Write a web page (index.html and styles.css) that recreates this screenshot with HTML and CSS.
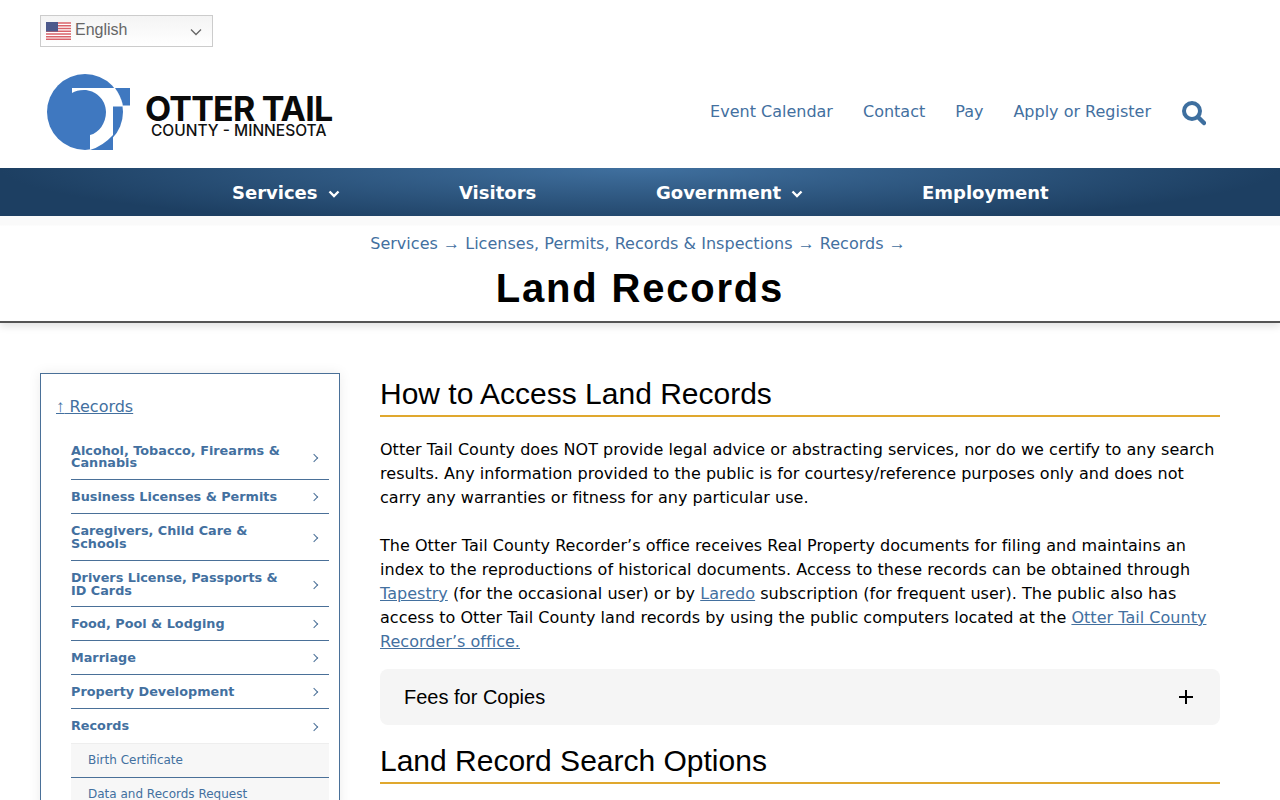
FILE: index.html
```html
<!DOCTYPE html>
<html lang="en">
<head>
    <meta charset="UTF-8">
    <meta name="viewport" content="width=device-width, initial-scale=1.0">
    <title>Land Records - Otter Tail County</title>
    <link rel="stylesheet" href="styles.css">
</head>
<body>
    <div class="lang-row">
        <div class="lang-select">
            <svg class="flag" width="25" height="18" viewBox="0 0 25 18">
                <rect width="25" height="18" fill="#fff"/>
                <path d="M0 1h25M0 3.800h25M0 6.500h25M0 9.200h25M0 12h25M0 14.700h25M0 17.300h25" stroke="#d9636b" stroke-width="1.400"/>
                <rect width="12" height="9.500" fill="#4d5a8c"/>
            </svg>
            <span class="lang-label">English</span>
            <svg class="lang-caret" width="12" height="8" viewBox="0 0 12 8"><path d="M1 1.500l5 5 5-5" fill="none" stroke="#666" stroke-width="1.300"/></svg>
        </div>
    </div>

    <header class="site-header">
        <a class="logo" href="#">
            <svg class="logo-mark" width="84" height="78" viewBox="47 73 84 78">
                <circle cx="85" cy="112" r="38" fill="#3f78c0"/>
                <path d="M72 88H115Q121 96 123 106.500H113V150H90V135C99 133 106 123 106 112C106 99 95 90 84 90C79 90 75 91 72 93Z" fill="#fff"/>
                <path d="M115 88H130V105.500H123Q121 96 115 88Z" fill="#3f78c0"/>
                <path d="M113 135Q103 146 90 150H113Z" fill="#3f78c0"/>
            </svg>
            <span class="logo-text">
                <span class="logo-name">OTTER TAIL</span>
                <span class="logo-sub">COUNTY - MINNESOTA</span>
            </span>
        </a>
        <nav class="util-nav">
            <a href="#">Event Calendar</a>
            <a href="#">Contact</a>
            <a href="#">Pay</a>
            <a href="#">Apply or Register</a>
            <svg class="search-icon" width="25" height="26" viewBox="0 0 25 26"><circle cx="11" cy="11" r="8" fill="none" stroke="#3e6f9f" stroke-width="4"/><path d="M17 17l6 6" stroke="#3e6f9f" stroke-width="4.500" stroke-linecap="round"/></svg>
        </nav>
    </header>

    <nav class="main-nav">
        <a href="#" class="nav-services">Services <svg width="12" height="8" viewBox="0 0 12 8"><path d="M1.500 1.500L6 6l4.500-4.500" fill="none" stroke="#fff" stroke-width="2.400"/></svg></a>
        <a href="#" class="nav-visitors">Visitors</a>
        <a href="#" class="nav-gov">Government <svg width="12" height="8" viewBox="0 0 12 8"><path d="M1.500 1.500L6 6l4.500-4.500" fill="none" stroke="#fff" stroke-width="2.400"/></svg></a>
        <a href="#" class="nav-jobs">Employment</a>
    </nav>

    <section class="page-title">
        <p class="crumbs"><a href="#">Services</a> <span class="arrow">→</span> <a href="#">Licenses, Permits, Records &amp; Inspections</a> <span class="arrow">→</span> <a href="#">Records</a> <span class="arrow">→</span></p>
        <h1>Land Records</h1>
    </section>

    <div class="layout">
        <aside class="side-nav">
            <a class="side-up" href="#"><span class="arrow">↑</span> Records</a>
            <ul class="side-list">
                <li><a href="#" class="first"><span>Alcohol, Tobacco, Firearms &amp; Cannabis</span></a></li>
                <li><a href="#"><span>Business Licenses &amp; Permits</span></a></li>
                <li><a href="#" class="roomy"><span>Caregivers, Child Care &amp; Schools</span></a></li>
                <li><a href="#" class="roomy tight"><span>Drivers License, Passports &amp; ID Cards</span></a></li>
                <li><a href="#"><span>Food, Pool &amp; Lodging</span></a></li>
                <li><a href="#"><span>Marriage</span></a></li>
                <li><a href="#"><span>Property Development</span></a></li>
                <li class="open"><a href="#"><span>Records</span></a>
                    <ul class="side-sub">
                        <li><a href="#">Birth Certificate</a></li>
                        <li><a href="#">Data and Records Request</a></li>
                    </ul>
                </li>
            </ul>
        </aside>

        <main class="content">
            <h2>How to Access Land Records</h2>
            <p>Otter Tail County does NOT provide legal advice or abstracting services, nor do we certify to any search results. Any information provided to the public is for courtesy/reference purposes only and does not carry any warranties or fitness for any particular use.</p>
            <p>The Otter Tail County Recorder’s office receives Real Property documents for filing and maintains an index to the reproductions of historical documents. Access to these records can be obtained through <a href="#">Tapestry</a> (for the occasional user) or by <a href="#">Laredo</a> subscription (for frequent user). The public also has access to Otter Tail County land records by using the public computers located at the <a href="#">Otter Tail County Recorder’s office.</a></p>
            <div class="accordion">
                <span>Fees for Copies</span>
                <svg width="16" height="16" viewBox="0 0 16 16"><path d="M8 1v14M1 8h14" stroke="#000" stroke-width="2"/></svg>
            </div>
            <h2>Land Record Search Options</h2>
        </main>
    </div>
</body>
</html>
```

FILE: styles.css
```css
:root {
    --link: #43709f;
    --side-line: #4a7098;
    --gold: #e0a82e;
}
* { margin: 0; padding: 0; box-sizing: border-box; }
body { font-family: 'DejaVu Sans', sans-serif; background: #fff; color: #000; font-size: 16px; }
a { color: var(--link); text-decoration: none; }
ul { list-style: none; }
.arrow { font-family: 'Liberation Sans', sans-serif; font-size: 17px; line-height: 1; }

.lang-row { padding: 15px 40px 0; height: 47px; }
.lang-select {
    display: flex; align-items: center; width: 173px; height: 32px; padding: 0 10px 0 5px;
    border: 1px solid #ccc; background: linear-gradient(#f4f4f4, #fff);
    font-family: 'Liberation Sans', sans-serif; font-size: 16px; color: #666;
}
.flag { margin-right: 4px; margin-top: -1px; }
.lang-label { margin-top: -2px; }
.lang-caret { margin-left: auto; margin-top: 1px; }

.site-header { display: flex; justify-content: space-between; align-items: center; height: 121px; padding: 8px 74px 0 47px; }
.logo { display: flex; align-items: center; gap: 14px; }
.logo-text { display: flex; flex-direction: column; align-items: center; color: #000; margin-top: 8px; }
.logo-name { font-family: Inter, sans-serif; font-weight: 700; font-size: 34px; line-height: 30px; letter-spacing: -0.8px; color: #0a0a0a; }
.logo-sub { font-family: Inter, sans-serif; font-weight: 500; font-size: 15.500px; line-height: 14px; color: #111; }
.util-nav { display: flex; align-items: center; gap: 30px; }
.search-icon { margin-top: 3px; }

.main-nav {
    position: relative; height: 48px; display: flex; align-items: center;
    background: radial-gradient(ellipse 640px 60px at 50% 0, #40709f, #1d3f62);
    font-weight: 700; font-size: 18px;
}
.main-nav a { color: #fff; position: absolute; top: 14px; }
.main-nav svg { margin-left: 4px; vertical-align: 1px; }
.nav-services { left: 232px; }
.nav-visitors { left: 459px; }
.nav-gov { left: 656px; }
.nav-jobs { left: 922px; }

.page-title {
    height: 107px; text-align: center; padding-top: 17px;
    border-bottom: 2px solid #555; box-shadow: 0 3px 8px rgba(0, 0, 0, 0.12);
    background: linear-gradient(#fafafa 9px, #fff 10px);
}
.crumbs { color: #43709f; line-height: 22px; letter-spacing: 0.03px; padding-right: 4px; }
.page-title h1 { font-family: 'Liberation Sans', sans-serif; font-size: 40px; font-weight: 700; letter-spacing: 1.800px; line-height: 46px; margin-top: 10px; }

.layout { display: flex; gap: 40px; padding: 50px 60px 0 40px; align-items: flex-start; }
.side-nav { flex: 0 0 300px; border: 1px solid var(--side-line); padding: 23px 10px 0 15px; box-shadow: 0 0 12px rgba(0, 0, 0, 0.08); }
.side-up { font-size: 16px; text-decoration: underline; }
.side-list { margin-top: 19px; padding-left: 15px; }
.side-list > li > a {
    display: flex; justify-content: space-between; align-items: center; min-height: 34px; padding: 4px 0;
    font-weight: 700; font-size: 12.800px; line-height: 12px; border-bottom: 1px solid var(--side-line);
}
.side-list > li > a span { max-width: 225px; }
.side-list > li > a.first { padding: 10px 0; }
.side-list > li > a.roomy { line-height: 13px; padding: 10px 0; }
.side-list > li > a.tight { padding-bottom: 9px; }
.side-list > li > a::after {
    content: ""; width: 5px; height: 5px; margin: 1px 12px 0 0;
    border-top: 1.500px solid #4a7098; border-right: 1.500px solid #4a7098; transform: rotate(45deg);
}
.side-list > li.open > a { border-bottom: none; }
.side-sub { background: #f7f7f7; border-top: 1px solid #eee; }
.side-sub a { display: block; height: 34px; line-height: 33px; padding-left: 17px; font-size: 12px; border-bottom: 1px solid var(--side-line); }

.content { flex: 1; min-width: 0; padding-top: 3px; }
.content h2 { font-family: 'Liberation Sans', sans-serif; font-weight: 400; font-size: 30px; line-height: 36px; padding-bottom: 3px; border-bottom: 2px solid var(--gold); margin-bottom: 21px; }
.content p { line-height: 24px; margin-bottom: 24px; letter-spacing: 0.03px; }
.content p a { text-decoration: underline; }
.accordion {
    display: flex; justify-content: space-between; align-items: center; height: 56px; padding: 0 26px 0 24px; margin-top: -9px; margin-bottom: 18px;
    background: #f5f5f5; border-radius: 8px; font-family: 'Liberation Sans', sans-serif; font-size: 20px;
}
```
